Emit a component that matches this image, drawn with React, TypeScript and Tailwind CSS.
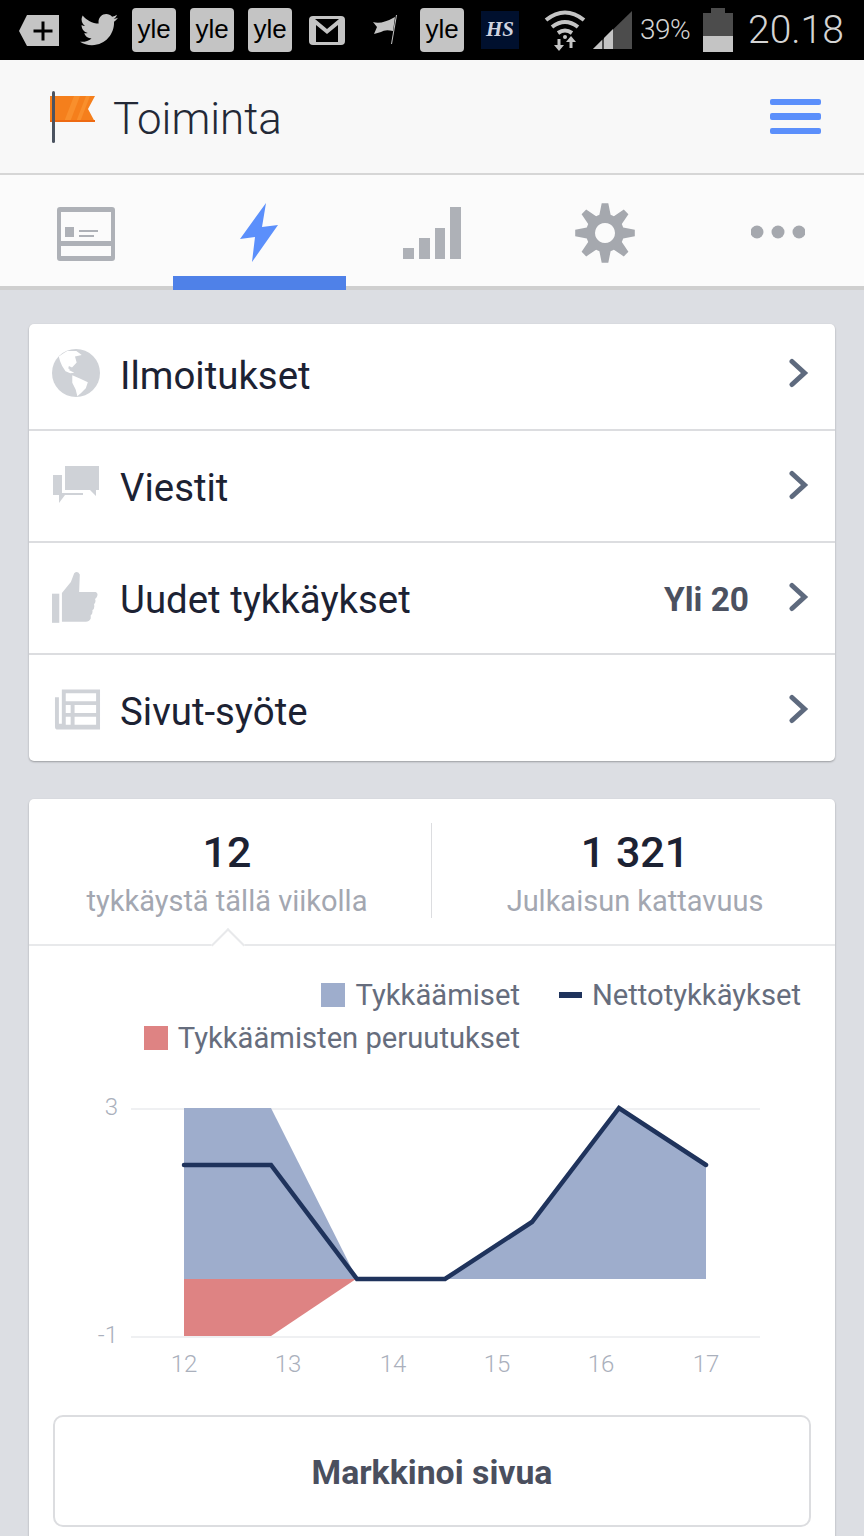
const gearPath = () => {
  const cx = 30;
  const cy = 30;
  const pts: string[] = [];
  for (let i = 0; i < 8; i++) {
    const a = (i * Math.PI) / 4 - Math.PI / 2;
    const add = (da: number, r: number) =>
      pts.push(`${(cx + Math.cos(a + da) * r).toFixed(1)} ${(cy + Math.sin(a + da) * r).toFixed(1)}`);
    add(-0.3, 19);
    add(-0.11, 30);
    add(0.11, 30);
    add(0.3, 19);
  }
  return `M${pts.join("L")}Z M30 20a10 10 0 1 0 .01 0Z`;
};

const YleTag = () => (
  <div className="w-11 h-11 bg-[#c4c4c4] rounded-[4px] flex items-center justify-center text-black text-[26px] leading-none font-['Liberation_Sans',sans-serif]">
    <span className="-mt-[3px]">yle</span>
  </div>
);

const Chevron = () => (
  <svg width="20" height="30" viewBox="0 0 20 30" className="text-[#5e6a7e] -mt-[3px]">
    <path d="M3 3.5 L15.5 15 L3 26.5" fill="none" stroke="currentColor" strokeWidth="5" strokeLinecap="round" />
  </svg>
);

const GlobeIcon = () => (
  <svg width="48" height="48" viewBox="40 30 142 142" className="-mt-[3px]">
    <circle cx="111" cy="101" r="71" fill="#cfd2d7" />
    <path
      d="M60 52Q75 42 85 36L112 36L128 48L108 52L113 70L100 84L90 92L106 100L94 102L80 96L70 80L64 66Z"
      fill="#fff"
    />
    <path d="M100 108L124 118L146 128L140 146L126 160L115 170L110 150L100 130Z" fill="#fff" />
    <path d="M90 80L105 88L100 92L88 88Z" fill="#cfd2d7" />
  </svg>
);

const ThumbIcon = () => (
  <svg width="47" height="52" viewBox="38 22 142 156" fill="#cfd2d7" className="-mt-[2px]">
    <rect x="38" y="90" width="22" height="88" />
    <path d="M68 88L95 55L105 28Q115 20 122 32L120 85L170 85Q180 90 172 102L168 106Q172 115 165 122Q168 135 160 140Q162 150 155 155L155 165Q150 175 140 175L68 175Z" />
  </svg>
);

const ChatIcon = () => (
  <svg width="48" height="40" viewBox="0 0 48 40" fill="#cfd2d7" className="-mt-[1px]">
    <path d="M13 0h34v24h-3v6l-6-6H13z" />
    <path d="M1 9h9v18h21v2H13l-6 8v-8H1z" />
  </svg>
);

const ListIcon = () => (
  <svg width="47" height="42" viewBox="0 0 48 42" fill="#cfd2d7" className="ml-[2px] -mt-[1px]">
    <path
      fillRule="evenodd"
      d="M8 0h39v41H4q-3 0-3-3V8h4v27h3zM12 4v8h31V4zM12 16v8h5v-8zM21 16v8h22v-8zM12 28v8h5v-8zM21 28v8h22v-8z"
    />
  </svg>
);

const rows = [
  { label: "Ilmoitukset", icon: <GlobeIcon />, box: "h-[107px] pb-[4px]" },
  { label: "Viestit", icon: <ChatIcon />, box: "h-[112px]" },
  { label: "Uudet tykkäykset", icon: <ThumbIcon />, extra: "Yli 20", box: "h-[112px]" },
  { label: "Sivut-syöte", icon: <ListIcon />, box: "h-[106px] pt-[4px]" },
];

const Chart = () => (
  <svg viewBox="29 1090 806 290" className="w-full h-[290px] block">
    <line x1="131" y1="1109" x2="760" y2="1109" stroke="#eff0f2" strokeWidth="2" />
    <line x1="131" y1="1337" x2="760" y2="1337" stroke="#eff0f2" strokeWidth="2" />
    <polygon points="184,1108 271,1108 357,1279 184,1279" fill="#9eadcc" />
    <polygon points="446,1279 532,1222 619,1108 706,1165 706,1279" fill="#9eadcc" />
    <polygon points="184,1279 356,1279 271,1336 184,1336" fill="#de8383" />
    <polyline
      points="184,1165 271,1165 357,1279 445,1279 532,1222 619,1108 706,1165"
      fill="none"
      stroke="#1f335c"
      strokeWidth="4.5"
      strokeLinecap="round"
    />
    <g fill="#aab0bc" fontSize="24" fontFamily="Roboto, sans-serif" fontWeight="300">
      <text x="118" y="1115" textAnchor="end">3</text>
      <text x="118" y="1343" textAnchor="end">-1</text>
      <text x="184" y="1372" textAnchor="middle">12</text>
      <text x="288" y="1372" textAnchor="middle">13</text>
      <text x="393" y="1372" textAnchor="middle">14</text>
      <text x="497" y="1372" textAnchor="middle">15</text>
      <text x="601" y="1372" textAnchor="middle">16</text>
      <text x="706" y="1372" textAnchor="middle">17</text>
    </g>
  </svg>
);

const App = () => {
  return (
    <div className="h-[1536px] w-[864px] overflow-hidden bg-[#dcdee3] font-['Roboto',sans-serif]">
      {/* status bar */}
      <div className="h-[60px] bg-black flex items-center pl-[19px] text-[#c4c4c4]">
        <svg width="40" height="31" viewBox="0 0 40 31">
          <path d="M8 0h32v31H8L0 16z" fill="#c4c4c4" />
          <path d="M14.5 14.5h8v-8h3v8h8v3h-8v8h-3v-8h-8z" fill="#000" />
        </svg>
        <svg width="38" height="32" viewBox="0 0 24 20" fill="#c4c4c4" className="ml-[21px]" preserveAspectRatio="none">
          <path d="M24 2.4c-.9.4-1.8.7-2.8.8 1-.6 1.8-1.6 2.2-2.7-1 .6-2 1-3.1 1.2C19.3.7 18 0 16.6 0c-2.7 0-4.9 2.2-4.9 4.9 0 .4 0 .8.1 1.1C7.7 5.8 4.1 3.9 1.7.9c-.4.7-.7 1.6-.7 2.5 0 1.7.9 3.2 2.2 4.1-.8 0-1.6-.2-2.2-.6v.1c0 2.4 1.7 4.4 3.9 4.8-.4.1-.8.2-1.3.2-.3 0-.6 0-.9-.1.6 2 2.4 3.4 4.6 3.4-1.7 1.3-3.8 2.1-6.1 2.1-.4 0-.8 0-1.2-.1C2.2 18.7 4.8 19.5 7.5 19.5c9.1 0 14-7.5 14-14v-.6c1-.7 1.8-1.5 2.5-2.5z" />
        </svg>
        <div className="ml-[14px]"><YleTag /></div>
        <div className="ml-[14px]"><YleTag /></div>
        <div className="ml-[14px]"><YleTag /></div>
        <svg width="36" height="29" viewBox="0 0 36 29" className="ml-[17px]">
          <rect width="36" height="29" rx="4" fill="#c4c4c4" />
          <rect x="3" y="3" width="30" height="23" rx="1" fill="#000" />
          <path d="M3 3h3l12 10L30 3h3v23h-4V9L18 18 7 9v17H3z" fill="#c4c4c4" />
        </svg>
        <svg width="25" height="30" viewBox="0 0 25 30" fill="#c4c4c4" className="ml-[28px]">
          <path d="M0 7q8 3 22-5l-2 14q-8-2-12 1l-7 2 3-7z" />
          <path d="M23 0l-5 29h1l5-29z" />
        </svg>
        <div className="ml-[22px]"><YleTag /></div>
        <div className="ml-[17px] w-[38px] h-[38px] bg-[#00102e] flex items-center justify-center text-[#d0d4e0] text-[21px] font-bold italic font-['Liberation_Serif',serif]">
          HS
        </div>
        <svg width="42" height="44" viewBox="0 0 42 44" fill="none" stroke="#c4c4c4" strokeWidth="4" className="ml-[25px]">
          <path d="M2 12q19-15 38 0M8 19q13-10 26 0M14 25q7-5 14 0" />
          <circle cx="21" cy="29" r="2" fill="#c4c4c4" stroke="none" />
          <path d="M15 31v9M27 40v-9" strokeWidth="3" />
          <path d="M10 37l5 6 5-6zM22 34l5-6 5 6z" fill="#c4c4c4" stroke="none" />
        </svg>
        <svg width="39" height="38" viewBox="0 0 39 38" className="ml-[7px]">
          <polygon points="0,38 39,0 39,38" fill="#4c4c4c" />
          <polygon points="0,38 9,29 9,38" fill="#c4c4c4" />
          <polygon points="11,27 11,38 20,38 20,18" fill="#c4c4c4" />
        </svg>
        <div className="ml-[8px] text-[28px] tracking-[-0.5px] font-light text-[#d4d4d4] w-[54px]">39%</div>
        <svg width="30" height="44" viewBox="0 0 30 44" className="ml-[9px]">
          <path d="M8 0h14v5h8v39H0V5h8z" fill="#4c4c4c" />
          <rect y="28" width="30" height="16" fill="#c4c4c4" />
        </svg>
        <div className="ml-[15px] text-[39px] font-light text-[#d4d4d4] leading-none">20.18</div>
      </div>

      {/* header */}
      <div className="h-[115px] bg-[#f8f8f8] border-b-2 border-[#d6d6d6] flex items-center justify-between pl-[50px] pr-[43px]">
        <div className="flex items-center">
          <svg width="46" height="56" viewBox="0 0 46 56">
            <path d="M0 7h45l-7 13 7 13H0z" fill="#f57f1c" />
            <path d="M14 33L24 7h6L20 33zM26 33L36 7h4L30 33z" fill="#f98f2c" />
            <rect x="0" y="31" width="45" height="2" fill="#ee6a12" />
            <rect x="2" y="2" width="3" height="52" rx="1.5" fill="#4b5360" />
          </svg>
          <div className="ml-[17px] pt-[6px] text-[43.8px] leading-none text-[#232937] font-light">Toiminta</div>
        </div>
        <div className="flex flex-col gap-[8px]">
          <div className="w-[51px] h-[6.5px] rounded-[2px] bg-[#5b8ffb]" />
          <div className="w-[51px] h-[6.5px] rounded-[2px] bg-[#5b8ffb]" />
          <div className="w-[51px] h-[6.5px] rounded-[2px] bg-[#5b8ffb]" />
        </div>
      </div>

      {/* tabs */}
      <div className="h-[115px] bg-[#fbfbfb] border-b-4 border-[#cfcfcf] grid grid-cols-5">
        <div className="flex items-start justify-center pt-[32px]">
          <svg width="58" height="54" viewBox="0 0 58 54" fill="#aeb1b7">
            <path fillRule="evenodd" d="M3 0h52q3 0 3 3v48q0 3-3 3H3q-3 0-3-3V3q0-3 3-3zM4 5v29h50V5zM4 39v10h50V39z" />
            <rect x="8" y="20" width="9" height="10" />
            <rect x="22" y="23" width="19" height="2" />
            <rect x="22" y="28" width="15" height="2" />
          </svg>
        </div>
        <div className="relative flex items-start justify-center pt-[28px]">
          <svg width="38" height="59" viewBox="0 0 38 59" fill="#5b8ffb">
            <polygon points="26,0 0,36 15,34 12,59 38,22 22,24" />
          </svg>
          <div className="absolute left-0 right-0 -bottom-[4px] h-[14px] bg-[#4f81e8]" />
        </div>
        <div className="flex items-start justify-center pt-[32px]">
          <svg width="58" height="52" viewBox="0 0 58 52" fill="#aeb1b7">
            <rect x="0" y="41" width="11" height="11" />
            <rect x="16" y="31" width="11" height="21" />
            <rect x="32" y="21" width="10" height="31" />
            <rect x="47" y="0" width="11" height="52" />
          </svg>
        </div>
        <div className="flex items-start justify-center pt-[28px]">
          <svg width="60" height="60" viewBox="0 0 60 60" fill="#a5a8ae">
            <path fillRule="evenodd" d={gearPath()} />
          </svg>
        </div>
        <div className="flex items-start justify-center pt-[50px]">
          <svg width="54" height="14" viewBox="0 0 54 14" fill="#a5a8ae">
            <circle cx="6" cy="7" r="6.5" />
            <circle cx="27" cy="7" r="6.5" />
            <circle cx="48" cy="7" r="6.5" />
          </svg>
        </div>
      </div>

      {/* list card */}
      <div className="mx-[29px] mt-[34px] bg-white rounded-[5px] shadow-[0_1px_2px_rgba(0,0,0,0.3)]">
        {rows.map((row, i) => (
          <div
            key={row.label}
            className={`${row.box} flex items-center pl-[23px] pr-[26px] ${i < rows.length - 1 ? "border-b-2 border-[#dcdde0]" : ""}`}
          >
            <div className="w-[68px] flex items-center">{row.icon}</div>
            <div className="pt-[4px] text-[38.4px] leading-none text-[#1c2233] flex-1">{row.label}</div>
            {row.extra && <div className="pt-[4px] text-[33.4px] font-bold text-[#4b5160] mr-[40px]">{row.extra}</div>}
            <Chevron />
          </div>
        ))}
      </div>

      {/* likes card */}
      <div className="mx-[29px] mt-[38px] bg-white rounded-[5px] shadow-[0_1px_2px_rgba(0,0,0,0.3)] h-[800px]">
        <div className="relative h-[147px] border-b-2 border-[#e8e9eb] flex items-center">
          <div className="w-[402px] text-center pr-[6px] pt-[7px]">
            <div className="text-[43px] leading-[52px] font-medium text-[#1c2233]">12</div>
            <div className="text-[29px] leading-[47px] text-[#a3a7b1]">tykkäystä tällä viikolla</div>
          </div>
          <div className="w-px h-[95px] bg-[#dcdde0] -mt-[3px]" />
          <div className="flex-1 text-center pl-[3px] pt-[7px]">
            <div className="text-[43px] leading-[52px] font-medium text-[#1c2233]">1 321</div>
            <div className="text-[29px] leading-[47px] text-[#a3a7b1]">Julkaisun kattavuus</div>
          </div>
          <div className="absolute left-[187px] -bottom-[13px] w-[24px] h-[24px] rotate-45 bg-white border-l-2 border-t-2 border-[#e8e9eb]" />
        </div>

        <div className="mt-[29px] pr-[34px] grid grid-cols-[auto_auto] justify-end justify-items-end gap-x-[39px] gap-y-[3px] text-[29.2px] leading-[40px] text-[#666d7d]">
          <div className="flex items-center gap-[11px]">
            <div className="w-[24px] h-[24px] bg-[#9eadcc]" />
            Tykkäämiset
          </div>
          <div className="flex items-center gap-[10px]">
            <div className="w-[23px] h-[6px] bg-[#1f335c]" />
            Nettotykkäykset
          </div>
          <div className="flex items-center gap-[10px]">
            <div className="w-[24px] h-[24px] bg-[#de8383]" />
            Tykkäämisten peruutukset
          </div>
        </div>

        <div className="mt-[32px]">
          <Chart />
        </div>

        <div className="mx-[24px] mt-[35px] h-[112px] pt-[5px] border-2 border-[#dcdde0] rounded-[10px] flex items-center justify-center text-[33.8px] font-bold text-[#4a4f5e]">
          Markkinoi sivua
        </div>
      </div>
    </div>
  );
};

export default App;
